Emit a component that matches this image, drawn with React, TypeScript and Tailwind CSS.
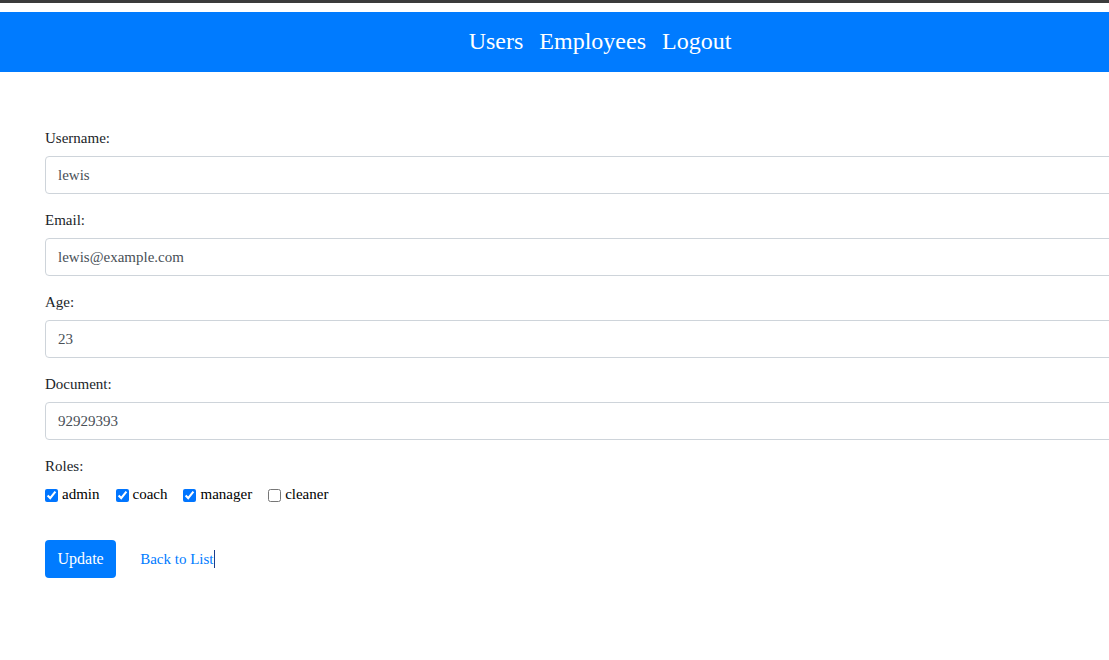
import React from 'react';

const fields = [
  { label: 'Username:', value: 'lewis' },
  { label: 'Email:', value: 'lewis@example.com' },
  { label: 'Age:', value: '23' },
  { label: 'Document:', value: '92929393' },
];

const roles = [
  { name: 'admin', checked: true },
  { name: 'coach', checked: true },
  { name: 'manager', checked: true },
  { name: 'cleaner', checked: false },
];

const App: React.FC = () => {
  return (
    <div className="w-full h-[660px] overflow-hidden bg-white font-['Liberation_Serif',serif]">
      <div className="w-[1200px]">
        <div className="h-[3px] bg-[#3b3b3b]" />
        <div className="h-[9px] bg-white" />
        <nav className="h-[60px] bg-[#007bff] flex items-center justify-center gap-[16px] text-white text-[24px] pb-[2px]">
          <a className="cursor-pointer">Users</a>
          <a className="cursor-pointer">Employees</a>
          <a className="cursor-pointer">Logout</a>
        </nav>

        <form className="px-[45px] pt-[56px]" onSubmit={(e) => e.preventDefault()}>
          {fields.map((f) => (
            <div key={f.label} className="mb-4">
              <label className="block text-[15px] leading-[21px] text-[#212529] mb-[7px]">{f.label}</label>
              <input
                type="text"
                defaultValue={f.value}
                className="block w-full h-[38px] px-3 text-[15px] text-[#495057] bg-white border border-[#ced4da] rounded-[4px] outline-none"
              />
            </div>
          ))}

          <div>
            <label className="block text-[15px] leading-[21px] text-[#212529] mb-[5px]">Roles:</label>
            <div className="flex items-center h-[24px]">
              {roles.map((r) => (
                <label key={r.name} className="flex items-center mr-4 text-[15px] text-black">
                  <input type="checkbox" defaultChecked={r.checked} className="m-0 w-[13px] h-[13px] mt-[2px]" />
                  <span className="ml-1">{r.name}</span>
                </label>
              ))}
            </div>
          </div>

          <div className="flex items-center mt-[34px]">
            <button
              type="submit"
              className="h-[38px] px-[12.5px] bg-[#007bff] text-white text-[16px] rounded-[4px]"
            >
              Update
            </button>
            <a className="ml-[24px] text-[15px] text-[#007bff] cursor-pointer flex items-center">
              Back to List
              <span className="inline-block w-px h-[18px] bg-[#1a3d8f]" />
            </a>
          </div>
        </form>
      </div>
    </div>
  );
};

export default App;
